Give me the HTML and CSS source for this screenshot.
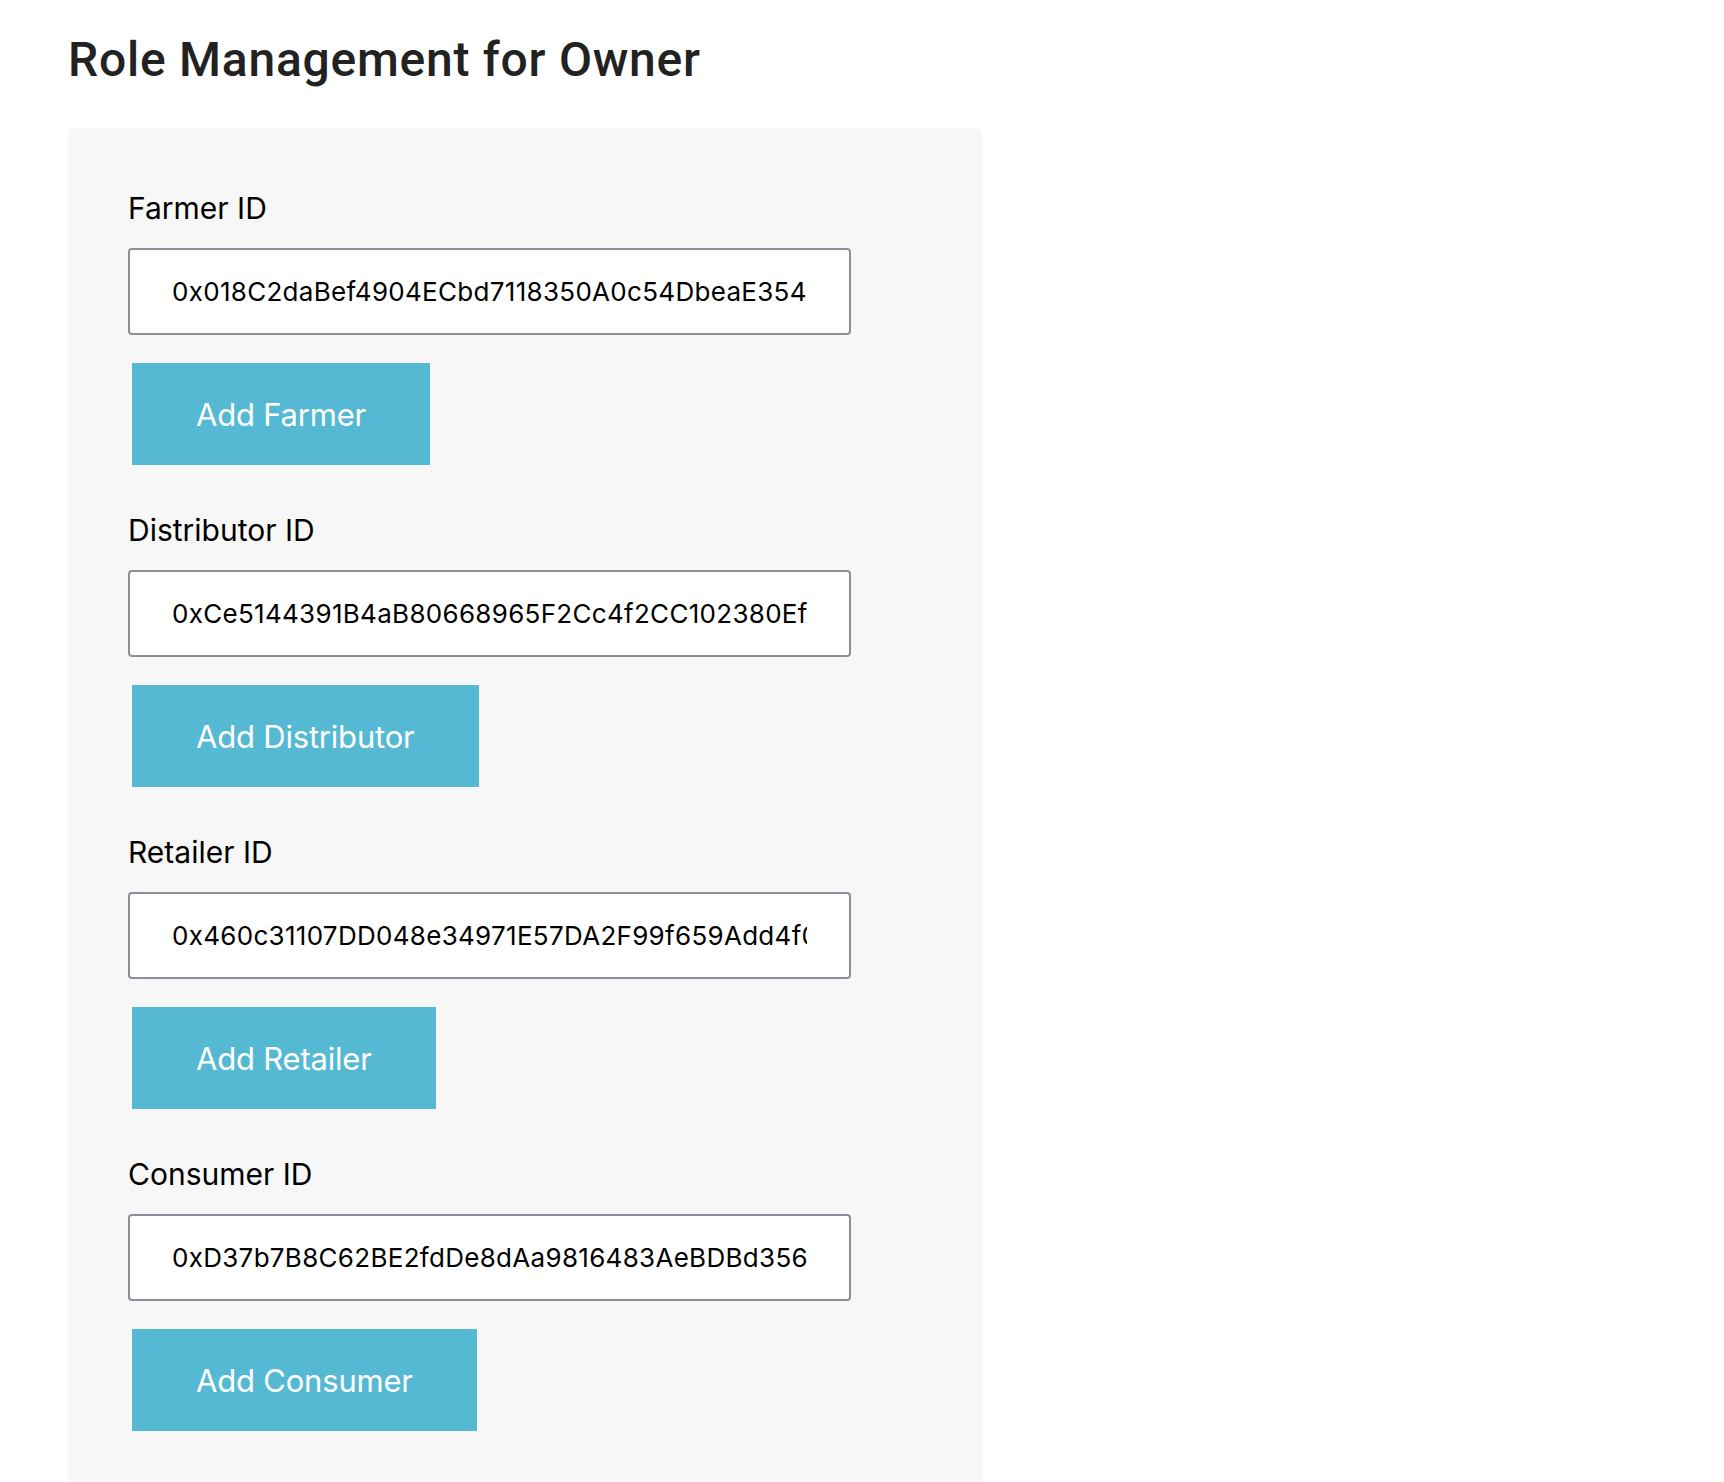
FILE: index.html
```html
<!DOCTYPE html>
<html lang="en">
<head>
<meta charset="utf-8">
<title>Role Management for Owner</title>
<link rel="stylesheet" href="styles.css">
</head>
<body>
<div class="page">
  <h1 class="title">Role Management for Owner</h1>
  <div class="panel">
    <div class="group">
      <label class="label" for="farmer">Farmer ID</label>
      <input class="field" id="farmer" type="text" value="0x018C2daBef4904ECbd7118350A0c54DbeaE354">
      <button class="btn" type="button">Add Farmer</button>
    </div>
    <div class="group">
      <label class="label" for="distributor">Distributor ID</label>
      <input class="field" id="distributor" type="text" value="0xCe5144391B4aB80668965F2Cc4f2CC102380Ef6B">
      <button class="btn" type="button">Add Distributor</button>
    </div>
    <div class="group">
      <label class="label" for="retailer">Retailer ID</label>
      <input class="field" id="retailer" type="text" value="0x460c31107DD048e34971E57DA2F99f659Add4f0b">
      <button class="btn" type="button">Add Retailer</button>
    </div>
    <div class="group">
      <label class="label" for="consumer">Consumer ID</label>
      <input class="field" id="consumer" type="text" value="0xD37b7B8C62BE2fdDe8dAa9816483AeBDBd356">
      <button class="btn" type="button">Add Consumer</button>
    </div>
  </div>
</div>
</body>
</html>
```
FILE: styles.css
```css
html, body {
  margin: 0;
  padding: 0;
  background: #ffffff;
}

.page {
  padding: 32px 0 0 68px;
}

.title {
  margin: 0 0 40px 0;
  font-family: Roboto, "Liberation Sans", sans-serif;
  font-weight: 500;
  font-size: 48px;
  line-height: 56px;
  letter-spacing: 0.75px;
  color: #222222;
}

.panel {
  width: 914px;
  box-sizing: border-box;
  background: #f7f7f7;
  border-radius: 6px;
  padding: 62px 60px 60px 60px;
  display: flex;
  flex-direction: column;
  gap: 47px;
}

.group {
  display: flex;
  flex-direction: column;
  align-items: flex-start;
}

.label {
  font-family: Inter, "Liberation Sans", sans-serif;
  font-size: 30px;
  line-height: 36px;
  color: #000000;
  margin-bottom: 22px;
}

.field {
  width: 723px;
  height: 87px;
  box-sizing: border-box;
  border: 2px solid #8e8e98;
  border-radius: 4px;
  background: #ffffff;
  padding: 0 42px;
  font-family: Inter, "Liberation Sans", sans-serif;
  font-size: 26px;
  letter-spacing: 0.3px;
  color: #000000;
  outline: none;
  margin: 0 0 28px 0;
}

.btn {
  height: 102px;
  margin-left: 4px;
  padding: 0 64px;
  border: none;
  border-radius: 0;
  background: #56b9d3;
  color: #ffffff;
  font-family: Inter, "Liberation Sans", sans-serif;
  font-size: 31px;
  letter-spacing: -0.2px;
  cursor: pointer;
}
```
